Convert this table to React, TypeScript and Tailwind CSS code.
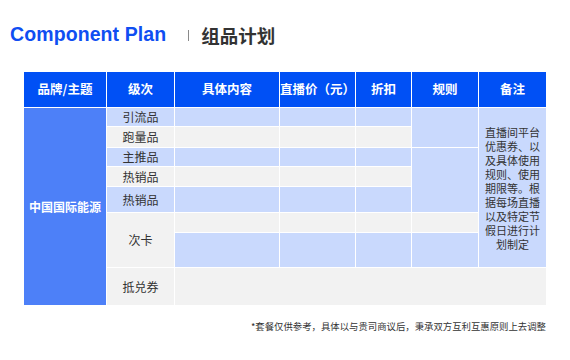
const headers = ["品牌/主题", "级次", "具体内容", "直播价（元）", "折扣", "规则", "备注"]

const noteLines = [
  "直播间平台",
  "优惠券、以",
  "及具体使用",
  "规则、使用",
  "期限等。根",
  "据每场直播",
  "以及特定节",
  "假日进行计",
  "划制定",
]

const blue = "bg-[#c9d9fd]"
const gray = "bg-[#f2f2f2]"

export default function App() {
  // body rows 2..8 for columns 3-5 alternate blue/gray
  const stripe = [blue, gray, blue, gray, blue, gray, blue]
  const rowStart = ["row-start-2", "row-start-3", "row-start-4", "row-start-5", "row-start-6", "row-start-7", "row-start-8"]
  const colStart = ["col-start-3", "col-start-4", "col-start-5"]

  return (
    <div
      className="w-[570px] h-[360px] bg-white flex flex-col"
      style={{ fontFamily: '"Noto Sans CJK SC", "Liberation Sans", sans-serif' }}
    >
      {/* Title */}
      <div className="flex items-center pl-[10px] pt-[20px] h-[50px]">
        <span
          className="text-[19.5px] font-bold text-[#0f4ef2] tracking-[0.1px]"
          style={{ fontFamily: '"Liberation Sans", Arial, sans-serif' }}
        >
          Component Plan
        </span>
        <span className="ml-[22px] w-px h-[11px] bg-[#8a8a8a]" />
        <span className="ml-[12px] text-[18.5px] font-bold text-[#333333] leading-none">组品计划</span>
      </div>

      {/* Table */}
      <div className="ml-[24px] mt-[22px] w-[522px] grid gap-px bg-white grid-cols-[82px_67px_104px_75px_55px_66px_67px] grid-rows-[35px_18px_20px_18px_19px_25px_19px_34px_37px] text-[12px] text-[#333333]">
        {headers.map((h) => (
          <div key={h} className="bg-[#0050f5] text-white font-bold text-[12.5px] flex items-center justify-center">
            {h}
          </div>
        ))}

        <div className="col-start-1 row-start-2 row-span-8 bg-[#4d80f8] text-white font-bold flex items-center justify-center">
          中国国际能源
        </div>

        <div className={`col-start-2 row-start-2 ${blue} flex items-center justify-center`}>引流品</div>
        <div className={`col-start-2 row-start-3 ${gray} flex items-center justify-center`}>跑量品</div>
        <div className={`col-start-2 row-start-4 ${blue} flex items-center justify-center`}>主推品</div>
        <div className={`col-start-2 row-start-5 ${gray} flex items-center justify-center`}>热销品</div>
        <div className={`col-start-2 row-start-6 ${blue} flex items-center justify-center`}>热销品</div>
        <div className={`col-start-2 row-start-7 row-span-2 ${gray} flex items-center justify-center`}>次卡</div>
        <div className={`col-start-2 row-start-9 ${gray} flex items-center justify-center`}>抵兑券</div>

        {colStart.map((c) =>
          stripe.map((s, i) => <div key={c + i} className={`${c} ${rowStart[i]} ${s}`} />)
        )}

        <div className={`col-start-6 row-start-2 row-span-2 ${blue}`} />
        <div className={`col-start-6 row-start-4 row-span-3 ${blue}`} />
        <div className={`col-start-6 row-start-7 ${gray}`} />
        <div className={`col-start-6 row-start-8 ${blue}`} />

        <div className={`col-start-7 row-start-2 row-span-7 ${blue} flex flex-col items-center justify-center text-[11px]`}>
          {noteLines.map((l) => (
            <span key={l} className="block h-[14px] leading-[14px]">{l}</span>
          ))}
        </div>

        <div className={`col-start-3 col-span-5 row-start-9 ${gray}`} />
      </div>

      {/* Footnote */}
      <div className="w-[546px] flex justify-end mt-[14px] text-[9.4px] text-[#333333]">
        *套餐仅供参考，具体以与贵司商议后，秉承双方互利互惠原则上去调整
      </div>
    </div>
  )
}
